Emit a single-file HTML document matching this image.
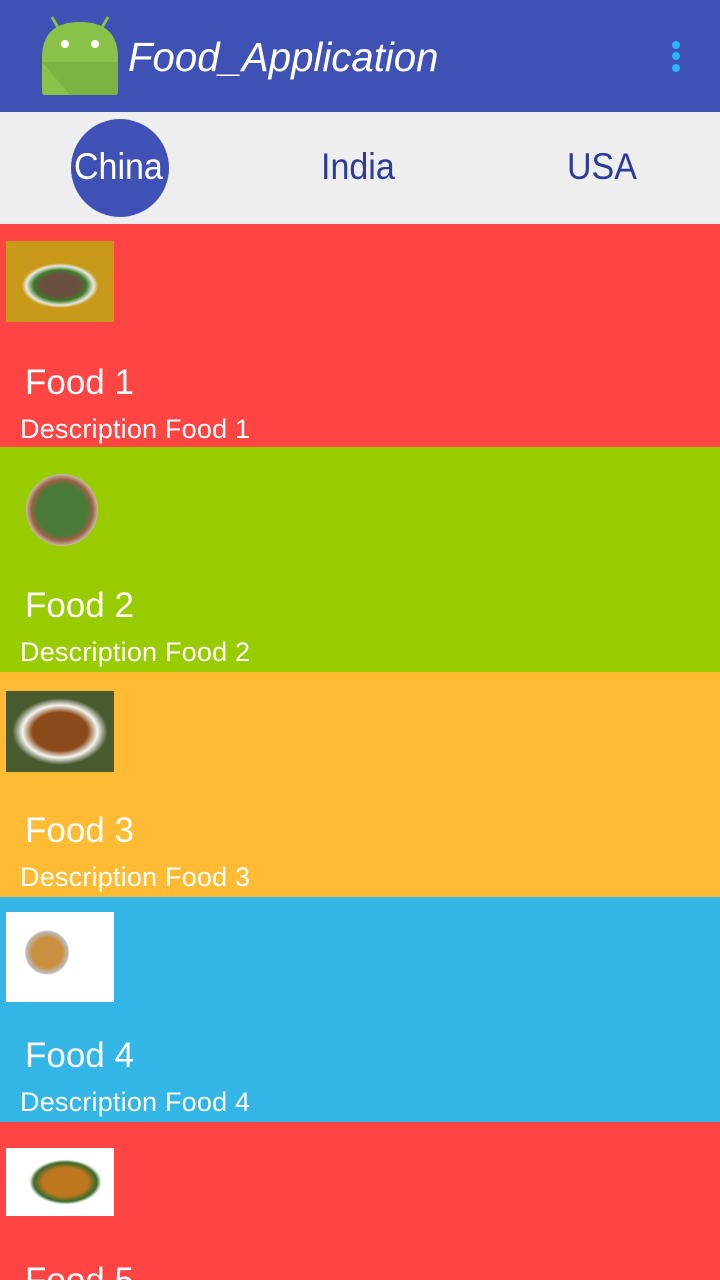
<!DOCTYPE html>
<html><head><meta charset="utf-8"><style>
*{margin:0;padding:0;box-sizing:border-box}
html,body{width:720px;height:1280px;overflow:hidden}
body{font-family:"Liberation Sans",sans-serif;background:#fff;position:relative}
.bar{position:absolute;left:0;top:0;width:720px;height:112px;background:#3f51b5}
.title{position:absolute;left:128px;top:34px;color:#fff;font-size:41px;font-style:italic;transform:scaleX(0.98);transform-origin:left}
.tabs{position:absolute;left:0;top:112px;width:720px;height:112px;background:#eeeeee}
.tab{position:absolute;top:148px;font-size:34px;color:#2c3a99;transform:scaleY(1.08)}
.circ{position:absolute;left:71px;top:119px;width:98px;height:98px;border-radius:50%;background:#3f51b5}
.row{position:absolute;left:0;width:720px;height:225px;overflow:hidden}
.row .n{position:absolute;left:25px;top:139px;color:#fff;font-size:35px}
.row .d{position:absolute;left:20px;top:190px;color:#fff;font-size:27px;letter-spacing:0.2px}
.img{position:absolute}
</style></head><body>
<div class="bar"></div>
<svg style="position:absolute;left:40px;top:14px" width="80" height="82" viewBox="0 0 80 82">
<line x1="12" y1="3" x2="20" y2="17" stroke="#8bc34a" stroke-width="3"/>
<line x1="68" y1="3" x2="60" y2="17" stroke="#8bc34a" stroke-width="3"/>
<path d="M2 44 Q2 8 40 8 Q78 8 78 44 L78 78 Q78 81 75 81 L5 81 Q2 81 2 78 Z" fill="#8bc34a"/>
<path d="M2 48 L78 48 L78 78 Q78 81 75 81 L30 81 Z" fill="#7cb342"/>
<circle cx="25" cy="30" r="4" fill="#fff"/><circle cx="55" cy="30" r="4" fill="#fff"/>
</svg>
<div class="title">Food_Application</div>
<svg style="position:absolute;left:670px;top:40px" width="12" height="34"><circle cx="6" cy="5" r="4" fill="#29b6f6"/><circle cx="6" cy="16" r="4" fill="#29b6f6"/><circle cx="6" cy="28" r="4" fill="#29b6f6"/></svg>
<div class="tabs"></div>
<div class="circ"></div>
<div class="tab" style="left:74px;color:#fff">China</div>
<div class="tab" style="left:321px">India</div>
<div class="tab" style="left:567px">USA</div>

<div class="row" style="top:224px;background:#ff4444">
<div class="img" style="left:6px;top:17px;width:108px;height:81px;background:radial-gradient(ellipse 48px 28px at 50% 55%,#6b5040 0 40%,#3e7a2a 55%,#e8e8e0 70%,#c99a1a 80%),#d4a21e"></div>
<div class="n">Food 1</div><div class="d">Description Food 1</div></div>
<div class="row" style="top:447px;background:#99cc00">
<div class="img" style="left:26px;top:27px;width:72px;height:72px;border-radius:50%;background:radial-gradient(circle,#4a7a3a 0 50%,#9a6040 60%,#ddd 75%,#aaa 100%)"></div>
<div class="n">Food 2</div><div class="d">Description Food 2</div></div>
<div class="row" style="top:672px;background:#ffbb33">
<div class="img" style="left:6px;top:19px;width:108px;height:81px;background:radial-gradient(ellipse 50px 35px at 50% 50%,#8a4a1a 0 55%,#f5f5f0 75%,#4a5a30 95%)"></div>
<div class="n">Food 3</div><div class="d">Description Food 3</div></div>
<div class="row" style="top:897px;background:#33b5e5">
<div class="img" style="left:6px;top:15px;width:108px;height:90px;background:radial-gradient(ellipse 30px 30px at 38% 45%,#c99040 0 50%,#bbb 70%,#fff 75%),#fff"></div>
<div class="n">Food 4</div><div class="d">Description Food 4</div></div>
<div class="row" style="top:1122px;height:158px;background:#ff4444">
<div class="img" style="left:6px;top:26px;width:108px;height:68px;background:radial-gradient(ellipse 45px 28px at 55% 50%,#c07820 0 50%,#3a6a2a 70%,#fff 80%),#fff"></div>
<div class="n">Food 5</div></div>
</body></html>
